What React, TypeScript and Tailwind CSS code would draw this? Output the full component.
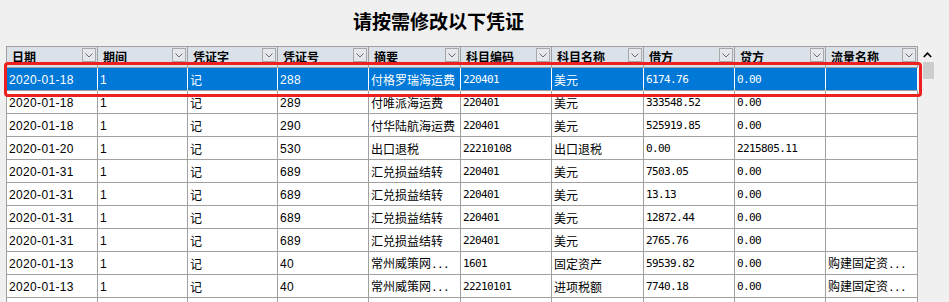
import React from "react";

type Kind = "sans" | "cjk" | "mono";

const cols: { title: string; kind: Kind }[] = [
  { title: "日期", kind: "sans" },
  { title: "期间", kind: "sans" },
  { title: "凭证字", kind: "cjk" },
  { title: "凭证号", kind: "sans" },
  { title: "摘要", kind: "cjk" },
  { title: "科目编码", kind: "mono" },
  { title: "科目名称", kind: "cjk" },
  { title: "借方", kind: "mono" },
  { title: "贷方", kind: "mono" },
  { title: "流量名称", kind: "cjk" },
];

const rows: string[][] = [
  ["2020-01-18", "1", "记", "288", "付格罗瑞海运费", "220401", "美元", "6174.76", "0.00", ""],
  ["2020-01-18", "1", "记", "289", "付唯派海运费", "220401", "美元", "333548.52", "0.00", ""],
  ["2020-01-18", "1", "记", "290", "付华陆航海运费", "220401", "美元", "525919.85", "0.00", ""],
  ["2020-01-20", "1", "记", "530", "出口退税", "22210108", "出口退税", "0.00", "2215805.11", ""],
  ["2020-01-31", "1", "记", "689", "汇兑损益结转", "220401", "美元", "7503.05", "0.00", ""],
  ["2020-01-31", "1", "记", "689", "汇兑损益结转", "220401", "美元", "13.13", "0.00", ""],
  ["2020-01-31", "1", "记", "689", "汇兑损益结转", "220401", "美元", "12872.44", "0.00", ""],
  ["2020-01-31", "1", "记", "689", "汇兑损益结转", "220401", "美元", "2765.76", "0.00", ""],
  ["2020-01-13", "1", "记", "40", "常州威策网...", "1601", "固定资产", "59539.82", "0.00", "购建固定资..."],
  ["2020-01-13", "1", "记", "40", "常州威策网...", "22210101", "进项税额", "7740.18", "0.00", "购建固定资..."],
  ["", "", "", "", "", "", "", "", "", ""],
];

const gridCols = "grid grid-cols-[91px_90px_90px_91px_92px_91px_92px_91px_91px_92px]";

function CellText({ text, kind }: { text: string; kind: Kind }) {
  if (kind === "mono") {
    return <span className="font-['DejaVu_Sans_Mono',monospace] text-[11px] tracking-[-0.6px]">{text}</span>;
  }
  if (kind === "sans") {
    return <span className="font-['Liberation_Sans',sans-serif] text-[12px] tracking-[0.35px]">{text}</span>;
  }
  if (text.endsWith("...")) {
    return (
      <span>
        <span className="font-['Noto_Sans_CJK_SC',sans-serif] text-[12px]">{text.slice(0, -3)}</span>
        <span className="font-['DejaVu_Sans_Mono',monospace] text-[11px] tracking-[-0.6px]">...</span>
      </span>
    );
  }
  return <span className="font-['Noto_Sans_CJK_SC',sans-serif] text-[12px]">{text}</span>;
}

function Chevron() {
  return (
    <svg width="12" height="12" viewBox="0 0 12 12">
      <path d="M2.5 4.5 L6 8 L9.5 4.5" fill="none" stroke="#6a6a6a" strokeWidth="1" />
    </svg>
  );
}

export default function App() {
  return (
    <div className="w-[949px] h-[302px] overflow-hidden bg-[#f0f0f0]">
      <div className="h-[46px] pl-[353px] pt-[9px] font-['Noto_Sans_CJK_SC',sans-serif] text-[19px] font-bold leading-[24px] text-black">
        请按需修改以下凭证
      </div>
      <div className="flex pl-[6px]">
        <div className="relative w-[912px] border-l border-t border-[#a0a0a0] bg-white">
          <div className={`${gridCols} h-[21px] bg-[#dbe1e9]`}>
            {cols.map((c, i) => (
              <div
                key={i}
                className="flex h-[21px] items-center justify-between border-r border-b border-[#a0a0a0] pl-[5px] pr-[1px]"
              >
                <span className="font-['Noto_Sans_CJK_SC',sans-serif] text-[12px] font-bold leading-[14px] text-black">
                  {c.title}
                </span>
                <div className="flex h-[14px] w-[14px] items-center justify-center self-start mt-[1px] border border-[#a8a8a8] bg-[#e4e7eb]">
                  <Chevron />
                </div>
              </div>
            ))}
          </div>
          {rows.map((r, ri) => {
            const sel = ri === 0;
            return (
              <div key={ri} className={gridCols}>
                {r.map((v, ci) => (
                  <div
                    key={ci}
                    className={
                      sel
                        ? "flex h-[23px] items-center overflow-hidden whitespace-nowrap border-r border-b border-r-white border-b-[#a0a0a0] bg-[#0078d7] pl-[2px] pt-[1px] leading-[14px] text-white"
                        : "flex h-[23px] items-center overflow-hidden whitespace-nowrap border-r border-b border-[#a0a0a0] bg-white pl-[2px] pt-[1px] leading-[14px] text-black"
                    }
                  >
                    <CellText text={v} kind={cols[ci].kind} />
                  </div>
                ))}
              </div>
            );
          })}
          <div className="absolute left-[-3px] top-[15px] h-[35px] w-[918px] rounded-[4px] border-[3px] border-[#ee1f1f]" />
        </div>
        <div className="flex w-[18px] flex-col pl-[5px]">
          <svg width="9" height="6" viewBox="0 0 9 6" className="mt-[6px] ml-[0px]">
            <path d="M0.8 5 L4.5 1.2 L8.2 5" fill="none" stroke="#000" strokeWidth="1.6" />
          </svg>
          <div className="mt-[4px] h-[17px] w-[11px] bg-[#cdcdcd]" />
        </div>
      </div>
    </div>
  );
}
